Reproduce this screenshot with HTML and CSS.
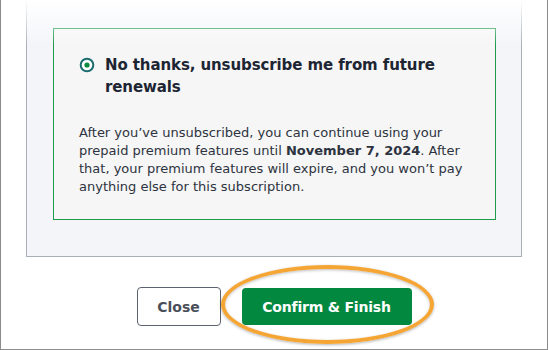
FILE: index.html
```html
<!DOCTYPE html>
<html lang="en">
<head>
    <meta charset="UTF-8">
    <meta name="viewport" content="width=device-width, initial-scale=1.0">
    <title>Cancel Subscription</title>
    <link rel="stylesheet" href="styles.css">
</head>
<body>
    <div class="frame">
        <div class="panel">
            <div class="option">
                <div class="option-title">
                    <svg class="radio" width="16" height="16" viewBox="0 0 16 16">
                        <circle cx="8" cy="8" r="6.3" fill="#fff" stroke="#1b6d70" stroke-width="2"/>
                        <circle cx="8" cy="8" r="2.6" fill="#0b8a40"/>
                    </svg>
                    <span>No thanks, unsubscribe me from future renewals</span>
                </div>
                <p class="option-text">After you’ve unsubscribed, you can continue using your prepaid premium features until <b>November 7, 2024</b>. After that, your premium features will expire, and you won’t pay anything else for this subscription.</p>
            </div>
        </div>
        <div class="actions">
            <button class="btn btn-close">Close</button>
            <div class="highlight-wrap">
                <button class="btn btn-confirm">Confirm &amp; Finish</button>
                <span class="highlight"></span>
            </div>
        </div>
        <div class="fade"></div>
    </div>
</body>
</html>
```

FILE: styles.css
```css
body {
    margin: 0;
    font-family: "DejaVu Sans", Verdana, sans-serif;
    background: #fff;
}
.frame {
    position: relative;
    width: 548px;
    height: 350px;
    box-sizing: border-box;
    border-left: 1px solid #8c8c8c;
    border-right: 1px solid #8c8c8c;
    border-bottom: 1px solid #8c8c8c;
    background: #fff;
    overflow: hidden;
}
.panel {
    margin-left: 25px;
    width: 496px;
    height: 257px;
    box-sizing: border-box;
    padding: 28px 25px 0 26px;
    background: #f3f5f9;
    border: 1px solid #a8afb7;
    border-top: none;
}
.option {
    background: #f6f6f6;
    border: 1px solid #1e9a4c;
    padding: 25px 24px 23px 25px;
    height: 192px;
    box-sizing: border-box;
}
.option-title {
    display: flex;
    align-items: flex-start;
    gap: 10px;
    font-size: 15px;
    font-weight: bold;
    line-height: 22px;
    color: #1d2533;
    letter-spacing: -0.1px;
}
.radio {
    flex: none;
    margin-top: 3px;
}
.option-text {
    margin: 26px 0 0;
    font-size: 13px;
    line-height: 18px;
    color: #2d3340;
}
.actions {
    display: flex;
    justify-content: center;
    align-items: center;
    gap: 21px;
    padding-top: 30px;
}
.btn {
    font-family: "DejaVu Sans", Verdana, sans-serif;
    font-size: 14px;
    font-weight: bold;
    border-radius: 4px;
    cursor: pointer;
}
.btn-close {
    width: 84px;
    height: 39px;
    background: #fff;
    color: #4a4f5a;
    border: 1px solid #5c6270;
}
.btn-confirm {
    width: 170px;
    height: 37px;
    background: #02883f;
    color: #fff;
    border: none;
    letter-spacing: -0.2px;
}
.highlight-wrap {
    position: relative;
}
.highlight {
    position: absolute;
    left: -21px;
    top: -23px;
    width: 213px;
    height: 79px;
    box-sizing: border-box;
    border: 4px solid #f5a533;
    border-radius: 50%;
    box-shadow: 0 1px 3px rgba(0,0,0,0.3), inset 0 1px 3px rgba(0,0,0,0.25);
    pointer-events: none;
}
.fade {
    position: absolute;
    top: 0;
    left: -1px;
    right: -1px;
    height: 45px;
    background: linear-gradient(#fff, rgba(255,255,255,0));
}
```
